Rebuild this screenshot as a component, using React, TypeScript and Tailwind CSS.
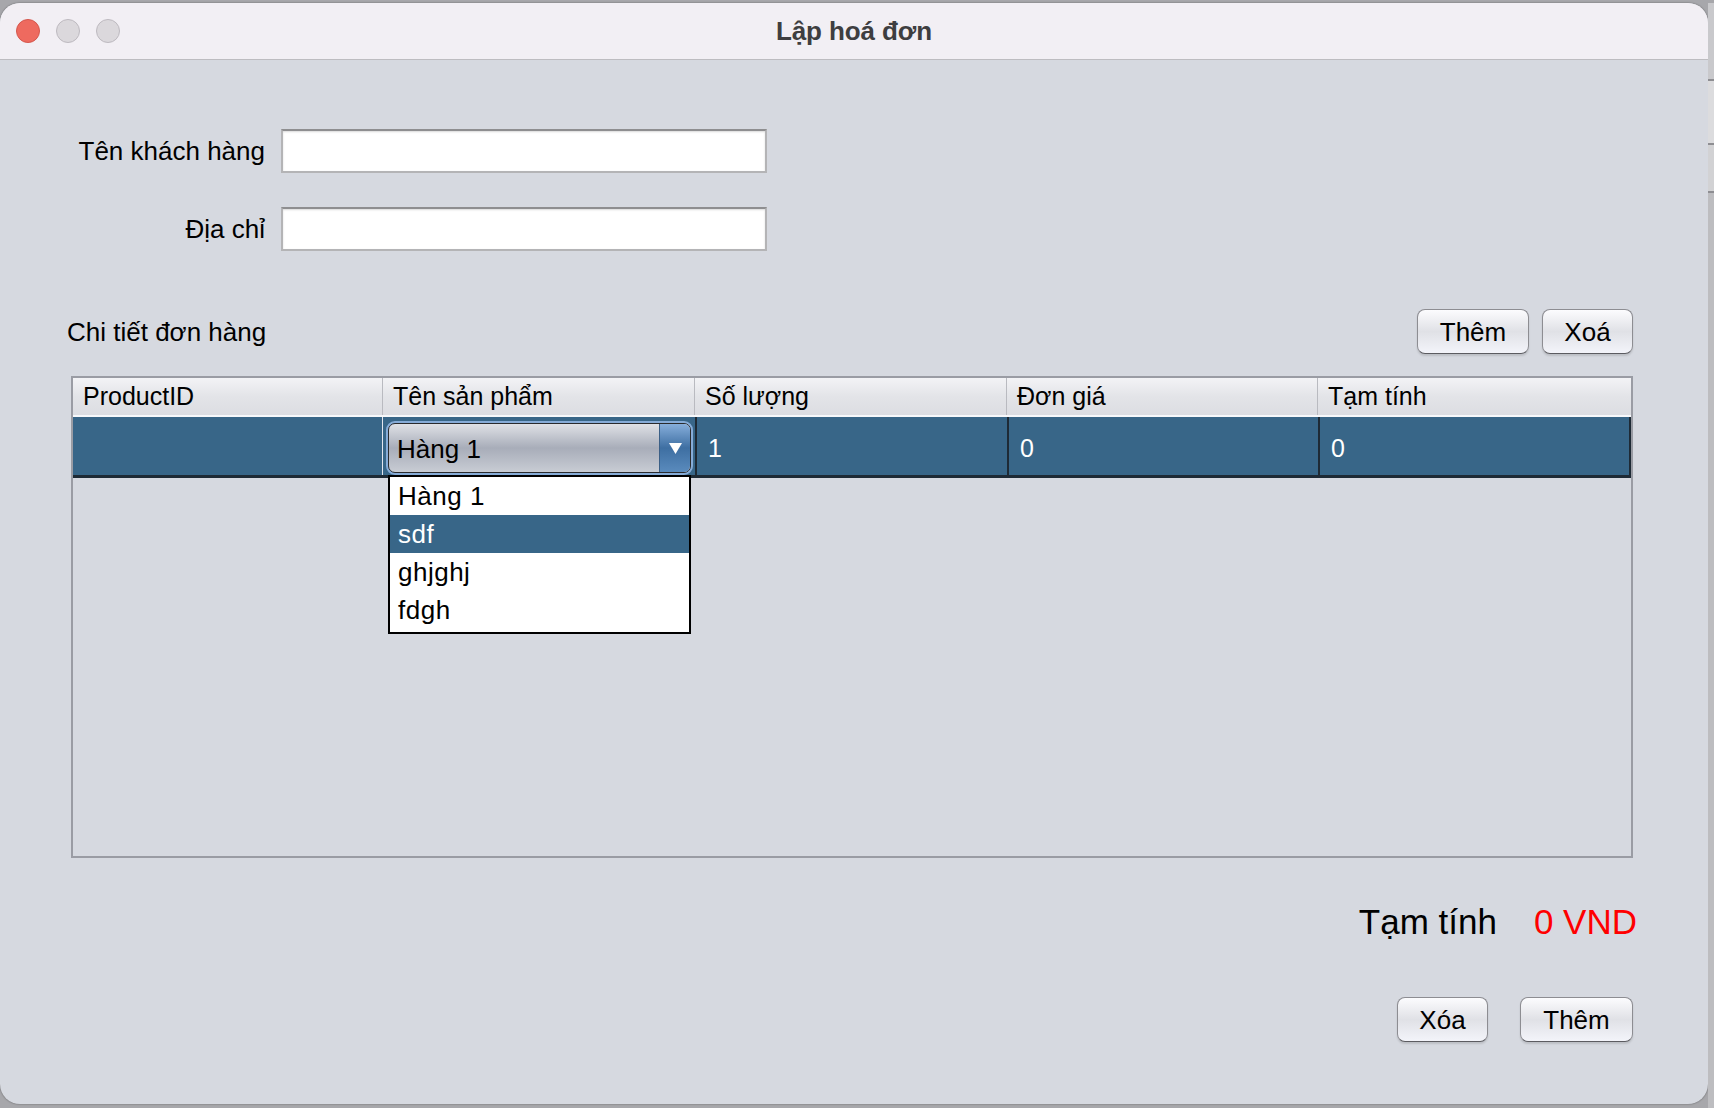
import React from "react";

function AquaButton({ label, w }: { label: string; w: string }) {
  return (
    <button
      className={`${w} h-[45px] rounded-[8px] border-[1.5px] border-[#8d8d92] border-b-[#5c5c61] bg-linear-to-b from-[#fcfcfe] via-[#e0e1e6] to-[#f3f4fa] text-[26px] leading-none text-black shadow-[0_2px_2px_rgba(0,0,0,0.12)] flex items-center justify-center`}
    >
      {label}
    </button>
  );
}

function TextInput() {
  return (
    <div className="w-[486px] h-[44px] bg-white border-2 border-[#b4b4b6] border-t-[#8e8e90] shadow-[inset_0_1px_2px_rgba(0,0,0,0.15)]" />
  );
}

export default function App() {
  const headers = ["ProductID", "Tên sản phẩm", "Số lượng", "Đơn giá", "Tạm tính"];
  const items = ["Hàng 1", "sdf", "ghjghj", "fdgh"];
  return (
    <div className="w-[1714px] h-[1108px] overflow-hidden bg-[#a7a7ab] flex pt-[3px] font-['Liberation_Sans',Arial,sans-serif] text-black">
      {/* window */}
      <div className="w-[1708px] h-[1101px] shrink-0 flex flex-col rounded-[20px] overflow-hidden bg-[#d6d9e0] shadow-[0_0_2px_rgba(0,0,0,0.45)]">
        {/* title bar */}
        <div className="h-[57px] shrink-0 bg-[#f2eff4] border-b border-[#bdbcc0] flex items-center relative">
          <div className="flex items-center gap-[16px] pl-[16px]">
            <span className="w-[24px] h-[24px] rounded-full bg-[#ee6a5f] border border-[#d4574d]" />
            <span className="w-[24px] h-[24px] rounded-full bg-[#dbd8dc] border border-[#bdb9bf]" />
            <span className="w-[24px] h-[24px] rounded-full bg-[#dbd8dc] border border-[#bdb9bf]" />
          </div>
          <div className="absolute inset-0 flex items-center justify-center pointer-events-none">
            <span className="text-[26px] font-bold text-[#3e3e40] tracking-[-0.1px]">Lập hoá đơn</span>
          </div>
        </div>

        {/* body */}
        <div className="flex-1 flex flex-col pt-[69px]">
          {/* form */}
          <div className="grid grid-cols-[204px_486px] gap-x-[16px] gap-y-[34px] pl-[61px] items-center">
            <div className="text-right text-[26px] leading-none">Tên khách hàng</div>
            <TextInput />
            <div className="text-right text-[26px] leading-none">Địa chỉ</div>
            <TextInput />
          </div>

          {/* detail header */}
          <div className="mt-[58px] flex items-center justify-between pl-[67px] pr-[75px]">
            <div className="text-[26px] leading-none">Chi tiết đơn hàng</div>
            <div className="flex gap-[13px]">
              <AquaButton label="Thêm" w="w-[112px]" />
              <AquaButton label="Xoá" w="w-[91px]" />
            </div>
          </div>

          {/* table */}
          <div className="mt-[22px] ml-[71px] mr-[75px] h-[482px] border-2 border-[#9a9ca4] flex flex-col">
            <div className="h-[39px] shrink-0 grid grid-cols-[310px_312px_312px_311px_1fr] bg-linear-to-b from-[#f3f3f6] via-[#e3e4e8] to-[#dcdde2] border-b-2 border-[#f7f8fb]">
              {headers.map((h, i) => (
                <div
                  key={h}
                  className={`flex items-center pl-[10px] text-[25px] leading-none ${i < 4 ? "border-r border-[#b9bac0]" : ""}`}
                >
                  {h}
                </div>
              ))}
            </div>
            <div className="h-[61px] shrink-0 grid grid-cols-[310px_312px_312px_311px_1fr] bg-[#386688] border-b-[3px] border-[#1e2a35] text-white">
              <div className="border-r border-[#e3e6ee]" />
              <div className="relative pl-[3px] pr-[2px] pt-[4px] pb-[0px]">
                <div className="relative h-full rounded-[9px] border-2 border-[#86acd8] bg-[#86acd8]">
                  <div className="h-full rounded-[7px] border-[1.5px] border-[#2a2b2e] flex overflow-hidden bg-linear-to-b from-[#dfe1e6] via-[#a8adb9] to-[#c8ccd4]">
                    <span className="flex items-center pl-[8px] pt-[2px] text-[26px] leading-none text-black">Hàng 1</span>
                    <div className="ml-auto w-[31px] flex items-center justify-center border-l border-[#3b5f86] bg-linear-to-b from-[#86aedb] via-[#3e6fa2] to-[#5a8bbd]">
                      <svg width="13" height="11" viewBox="0 0 13 11">
                        <path d="M0 0 H13 L6.5 11 Z" fill="#ffffff" />
                      </svg>
                    </div>
                  </div>
                  {/* dropdown list */}
                  <div className="absolute left-[0px] right-[0px] top-[52px] z-10 bg-white border-2 border-black text-black pb-[3px]">
                    {items.map((it, i) => (
                      <div
                        key={it}
                        className={`h-[38px] flex items-center pl-[8px] text-[26px] leading-none tracking-[0.5px] ${i === 1 ? "bg-[#386688] text-white" : ""}`}
                      >
                        {it}
                      </div>
                    ))}
                  </div>
                </div>
              </div>
              <div className="flex items-center pl-[11px] pt-[5px] text-[25px] leading-none border-l-2 border-[#1e2a35]">1</div>
              <div className="flex items-center pl-[11px] pt-[5px] text-[25px] leading-none border-l-2 border-[#1e2a35]">0</div>
              <div className="flex items-center pl-[11px] pt-[5px] text-[25px] leading-none border-x-2 border-[#1e2a35]">0</div>
            </div>
            <div className="flex-1" />
          </div>

          {/* total */}
          <div className="mt-[40px] flex items-center justify-end gap-[37px] pr-[71px] h-[46px]">
            <span className="text-[35px] leading-none">Tạm tính</span>
            <span className="text-[35px] leading-none text-[#ff0000]">0 VND</span>
          </div>

          {/* bottom buttons */}
          <div className="mt-[53px] flex justify-end gap-[32px] pr-[75px]">
            <AquaButton label="Xóa" w="w-[91px]" />
            <AquaButton label="Thêm" w="w-[113px]" />
          </div>
        </div>
      </div>
      {/* desktop strip */}
      <div className="flex-1 flex flex-col bg-[#d2d2d4]">
        <div className="h-[76px] bg-[#c9c9cc]" />
        <div className="h-[2px] bg-[#8e8e92]" />
        <div className="h-[62px] bg-[#dcdcde]" />
        <div className="h-[2px] bg-[#8e8e92]" />
        <div className="h-[46px]" />
        <div className="h-[2px] bg-[#8e8e92]" />
        <div className="flex-1 bg-[#bdbdc0]" />
      </div>
    </div>
  );
}
